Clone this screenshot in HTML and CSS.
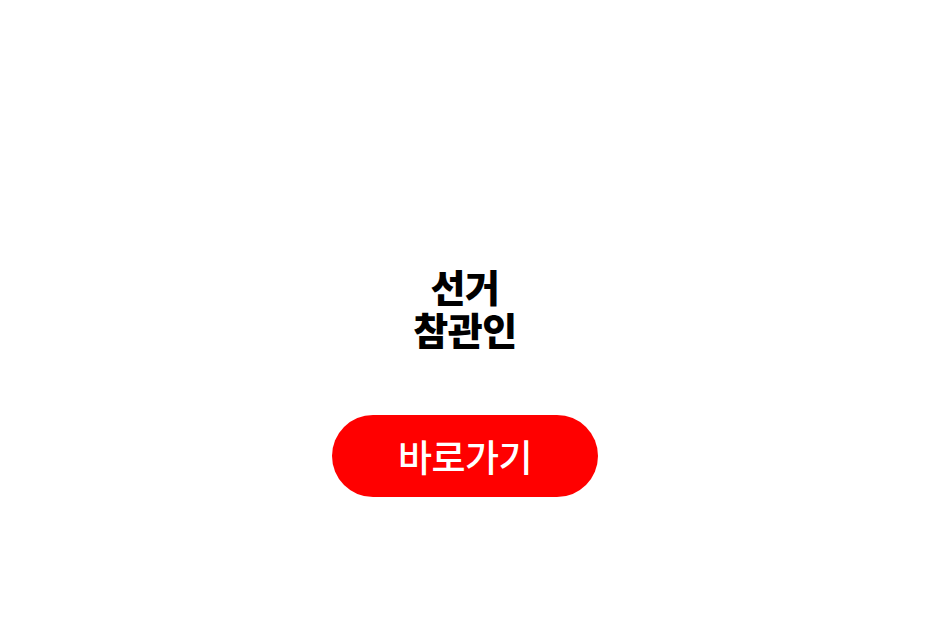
FILE: index.html
```html
<!DOCTYPE html>
<html lang="ko">
<head>
    <meta charset="UTF-8">
    <meta name="viewport" content="width=device-width, initial-scale=1.0">
    <title>선거 참관인</title>
    <link rel="stylesheet" href="styles.css">
</head>
<body>
<div class="container">
    <h1 class="title">선거<br>참관인</h1>
    <a class="go-btn" href="#">바로가기</a>
</div>
</body>
</html>
```
FILE: styles.css
```css
body {
    margin: 0;
    background: #fff;
    font-family: "Noto Sans CJK KR", "Noto Sans", sans-serif;
    color: #000;
}

.container {
    display: flex;
    flex-direction: column;
    align-items: center;
    padding-top: 264px;
}

.title {
    margin: 0;
    font-size: 38px;
    font-weight: 900;
    line-height: 43px;
    text-align: center;
    letter-spacing: -0.5px;
}

.go-btn {
    margin-top: 65px;
    width: 266px;
    height: 82px;
    border-radius: 41px;
    background: #ff0000;
    color: #fff;
    text-decoration: none;
    font-size: 37px;
    font-weight: 500;
    display: flex;
    align-items: center;
    justify-content: center;
    letter-spacing: -0.5px;
}
```
